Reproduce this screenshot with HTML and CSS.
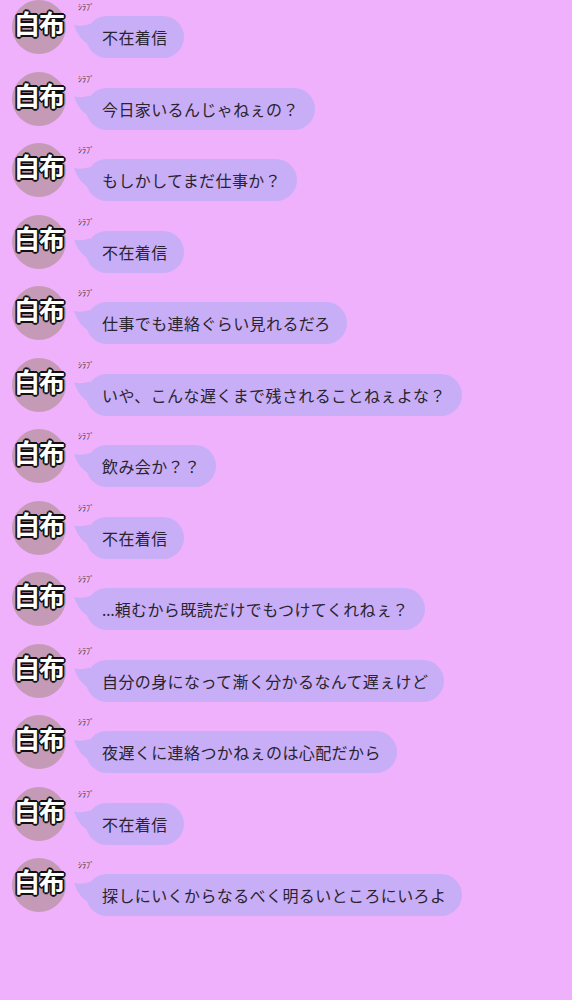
FILE: index.html
```html
<!DOCTYPE html>
<html lang="ja">
<head>
<meta charset="utf-8">
<title>chat</title>
<link rel="stylesheet" href="styles.css">
</head>
<body>
<div class="chat">
  <div class="row"><div class="avatar">白布</div><div class="content"><div class="name">ｼﾗﾌﾞ</div><div class="bubble">不在着信</div></div></div>
  <div class="row"><div class="avatar">白布</div><div class="content"><div class="name">ｼﾗﾌﾞ</div><div class="bubble">今日家いるんじゃねぇの？</div></div></div>
  <div class="row"><div class="avatar">白布</div><div class="content"><div class="name">ｼﾗﾌﾞ</div><div class="bubble">もしかしてまだ仕事か？</div></div></div>
  <div class="row"><div class="avatar">白布</div><div class="content"><div class="name">ｼﾗﾌﾞ</div><div class="bubble">不在着信</div></div></div>
  <div class="row"><div class="avatar">白布</div><div class="content"><div class="name">ｼﾗﾌﾞ</div><div class="bubble">仕事でも連絡ぐらい見れるだろ</div></div></div>
  <div class="row"><div class="avatar">白布</div><div class="content"><div class="name">ｼﾗﾌﾞ</div><div class="bubble">いや、こんな遅くまで残されることねぇよな？</div></div></div>
  <div class="row"><div class="avatar">白布</div><div class="content"><div class="name">ｼﾗﾌﾞ</div><div class="bubble">飲み会か？？</div></div></div>
  <div class="row"><div class="avatar">白布</div><div class="content"><div class="name">ｼﾗﾌﾞ</div><div class="bubble">不在着信</div></div></div>
  <div class="row"><div class="avatar">白布</div><div class="content"><div class="name">ｼﾗﾌﾞ</div><div class="bubble"><span class="ell">…</span>頼むから既読だけでもつけてくれねぇ？</div></div></div>
  <div class="row"><div class="avatar">白布</div><div class="content"><div class="name">ｼﾗﾌﾞ</div><div class="bubble">自分の身になって漸く分かるなんて遅ぇけど</div></div></div>
  <div class="row"><div class="avatar">白布</div><div class="content"><div class="name">ｼﾗﾌﾞ</div><div class="bubble">夜遅くに連絡つかねぇのは心配だから</div></div></div>
  <div class="row"><div class="avatar">白布</div><div class="content"><div class="name">ｼﾗﾌﾞ</div><div class="bubble">不在着信</div></div></div>
  <div class="row"><div class="avatar">白布</div><div class="content"><div class="name">ｼﾗﾌﾞ</div><div class="bubble">探しにいくからなるべく明るいところにいろよ</div></div></div>
</div>
</body>
</html>
```

FILE: styles.css
```css
html, body {
  margin: 0;
  padding: 0;
}
body {
  width: 572px;
  height: 1000px;
  overflow: hidden;
  background: #efb1fb;
  font-family: "Noto Sans CJK JP", "Noto Sans", sans-serif;
  color: #2a2430;
}
.chat {
  display: flex;
  flex-direction: column;
  gap: 17.5px;
}
.row {
  display: flex;
  align-items: flex-start;
  height: 54px;
}
.avatar {
  flex: none;
  width: 54px;
  height: 54px;
  margin-left: 12px;
  border-radius: 50%;
  background: #c59ab6;
  color: #fff;
  font-weight: 700;
  font-size: 26px;
  line-height: 46px;
  letter-spacing: -1px;
  white-space: nowrap;
  display: flex;
  justify-content: center;
  text-shadow:
    1.8px 0 0 #111, -1.8px 0 0 #111, 0 1.8px 0 #111, 0 -1.8px 0 #111,
    1.3px 1.3px 0 #111, -1.3px 1.3px 0 #111, 1.3px -1.3px 0 #111, -1.3px -1.3px 0 #111;
}
.content {
  margin-left: 12px;
  display: flex;
  flex-direction: column;
  align-items: flex-start;
}
.name {
  font-size: 8px;
  line-height: 10px;
  height: 10px;
  margin-top: 2px;
  margin-bottom: 4px;
  color: #3b3340;
}
.bubble {
  position: relative;
  margin-left: 8px;
  height: 42px;
  line-height: 42px;
  padding: 0 16px;
  border-radius: 21px;
  background: #c8aef6;
  font-size: 16px;
  letter-spacing: 0.4px;
  white-space: nowrap;
}
.ell {
  font-family: "Noto Sans", sans-serif;
  letter-spacing: 0;
}
.bubble::before {
  content: "";
  position: absolute;
  left: -14px;
  top: 4px;
  width: 20px;
  height: 26px;
  background: #c8aef6;
  clip-path: path("M2 5 Q 9 7 18 4 L 18 25 Q 7 20 2 5 Z");
}
```
